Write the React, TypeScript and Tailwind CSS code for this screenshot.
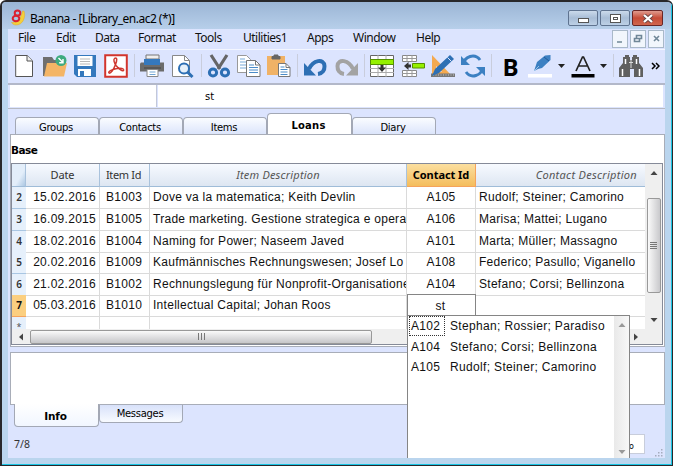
import React from "react";
import clsx from "clsx";

const MENU: [string, string][] = [
  ["File", "w-[38px]"],
  ["Edit", "w-[39px]"],
  ["Data", "w-[43px]"],
  ["Format", "w-[57px]"],
  ["Tools", "w-[48px]"],
  ["Utilities1", "w-[64px]"],
  ["Apps", "w-[46px]"],
  ["Window", "w-[63px]"],
  ["Help", "w-[40px]"],
];

const ROWS = [
  { n: 2, h: "h-[22px]", date: "15.02.2016", item: "B1003", text: "Dove va la matematica; Keith Devlin", id: "A105", who: "Rudolf; Steiner; Camorino" },
  { n: 3, h: "h-[22px]", date: "16.09.2015", item: "B1005", text: "Trade marketing. Gestione strategica e opera", id: "A106", who: "Marisa; Mattei; Lugano" },
  { n: 4, h: "h-[21px]", date: "18.02.2016", item: "B1004", text: "Naming for Power; Naseem Javed", id: "A101", who: "Marta; Müller; Massagno" },
  { n: 5, h: "h-[22px]", date: "20.02.2016", item: "B1009", text: "Kaufmännisches Rechnungswesen; Josef Lo", id: "A108", who: "Federico; Pasullo; Viganello" },
  { n: 6, h: "h-[21px]", date: "21.02.2016", item: "B1002", text: "Rechnungslegung für Nonprofit-Organisatione", id: "A104", who: "Stefano; Corsi; Bellinzona" },
  { n: 7, h: "h-[22px]", date: "05.03.2016", item: "B1010", text: "Intellectual Capital; Johan Roos", id: "", who: "" },
];

const SUGGESTIONS = [
  ["A102", "Stephan; Rossier; Paradiso"],
  ["A104", "Stefano; Corsi; Bellinzona"],
  ["A105", "Rudolf; Steiner; Camorino"],
];

const COLS = "grid grid-cols-[14px_74px_50px_257px_69px_169px]";

function Icon({ children }: { children: React.ReactNode }) {
  return (
    <svg width="24" height="24" viewBox="0 0 24 24" fill="none" className="shrink-0">
      {children}
    </svg>
  );
}

const Sep = () => <div className="mx-auto h-[23px] w-px bg-[#c9cddc]" />;

const Caret = () => (
  <svg width="7" height="4" viewBox="0 0 7 4" className="shrink-0">
    <path d="M0 0h7L3.5 4z" fill="#222" />
  </svg>
);

function Toolbar() {
  return (
    <div className="grid h-[32px] grid-cols-[31px_31px_30px_31px_6px_30px_31px_6px_30px_30px_30px_7px_30px_30px_6px_30px_31px_30px_30px_7px_31px_28px_15px_27px_15px_4px_31px_19px] place-items-center border-t border-[#f3f6ff] bg-[#dce4fe]">
      <Icon>
        <path d="M3.7 1.5h11.5l5.3 5.3v15.7H3.7z" fill="#fff" stroke="#555" />
        <path d="M15 1.5v5.5h5.5" fill="#eee" stroke="#555" />
      </Icon>
      <Icon>
        <path d="M0 3h9l2 3h10v16H0z" fill="#6f6f6f" />
        <path d="M4 9h20l-3 13.5H1z" fill="#f4b566" />
        <circle cx="18" cy="6.5" r="5.5" fill="#3eab80" />
        <path d="M15.5 4l4.5 4.5M20 5v3.8h-3.8" stroke="#fff" strokeWidth="1.4" />
      </Icon>
      <Icon>
        <path d="M1 1h22v22H4l-3-3z" fill="#3478bd" />
        <path d="M4.5 2h15v10h-15z" fill="#fff" />
        <path d="M7 5h10M7 7.5h10M7 10h10" stroke="#b8b8b8" />
        <path d="M5 15h13v7H5z" fill="#fff" />
        <path d="M7 17h4v5H7z" fill="#3478bd" />
      </Icon>
      <Icon>
        <path d="M1.2 1.2h21.6v21.6H1.2z" fill="#fff" stroke="#d2352d" strokeWidth="2" />
        <path d="M10.5 4.500c3-1.800 2.600 2 1 6C9.700 15.500 6.500 20 5 19c-1.500-1.500 4-4 8-4.500 4-.6 7 0 6.700 1.500-.5 2-5-1-7.700-4.500-1.800-2.500-2.800-6-1.500-7z" stroke="#cf3830" strokeWidth="1.500" />
      </Icon>
      <Sep />
      <Icon>
        <path d="M6 1h13v4H6z" fill="#eee" stroke="#777" />
        <path d="M1 8.500h23v9H0v-8z" fill="#6b6b6b" />
        <path d="M4 5h16v6H4z" fill="#3478bd" />
        <path d="M4 14h17" stroke="#444" />
        <path d="M7 15.500h11v7H7z" fill="#fff" stroke="#888" />
        <path d="M9.500 18h6M9.500 20.500h6" stroke="#6fa5d4" />
      </Icon>
      <Icon>
        <path d="M1.500 1.500h12l5 5v16h-17z" fill="#fff" stroke="#888" />
        <path d="M13.500 1.500v5h5" stroke="#888" />
        <circle cx="13" cy="14.500" r="5" fill="#e6f0fa" stroke="#2d6fb4" strokeWidth="2" />
        <path d="M16.500 18l5 5" stroke="#2d6fb4" strokeWidth="3" />
      </Icon>
      <Sep />
      <Icon>
        <path d="M4 1l9 14M20 1l-9 14" stroke="#666" strokeWidth="3.200" />
        <circle cx="6" cy="18.500" r="3.600" stroke="#2d6fb4" strokeWidth="3" />
        <circle cx="18" cy="18.500" r="3.600" stroke="#2d6fb4" strokeWidth="3" />
      </Icon>
      <Icon>
        <path d="M.5 1.500h9l4 4v13H.5z" fill="#fff" stroke="#999" />
        <path d="M3 5h5M3 8h6M3 11h6M3 14h6" stroke="#76a9d8" />
        <path d="M9.500 6.500h9l4.500 4.500v11.500H9.500z" fill="#fff" stroke="#777" />
        <path d="M18.500 6.500V11H23" stroke="#777" />
        <path d="M12 11h5M12 13.500h9M12 16h9M12 18.500h9" stroke="#4b8cc8" />
      </Icon>
      <Icon>
        <path d="M0 2h18v19H0z" fill="#f0b266" />
        <path d="M5 2.500h8V5H5zM7 1h4v2H7z" fill="#666" stroke="#666" />
        <path d="M11.500 9.500h7.500l4 4v9H11.500z" fill="#fff" stroke="#777" />
        <path d="M19 9.500v4h4" stroke="#777" />
        <path d="M13.500 13h4M13.500 15.500h7M13.500 18h7M13.500 20.500h7" stroke="#4b8cc8" />
      </Icon>
      <Sep />
      <Icon>
        <path d="M5 15C9 6 20 4 20.500 12c.2 4-2 7.500-6.500 8" stroke="#2d6fb4" strokeWidth="4" />
        <path d="M0 9v12.500h12z" fill="#2d6fb4" />
      </Icon>
      <Icon>
        <path d="M19 15C15 6 4 4 3.500 12c-.2 4 2 7.500 6.500 8" stroke="#a3a3a3" strokeWidth="4" />
        <path d="M24 9v12.500H12z" fill="#a3a3a3" />
      </Icon>
      <Sep />
      <Icon>
        <path d="M.5 1.500h23v21H.5z" fill="#fff" stroke="#666" />
        <path d="M8 1v22M16 1v22M0 14.500h24M0 18.500h24" stroke="#aaa" />
        <path d="M.5 5.500h23v5H.5z" fill="#95f000" stroke="#559000" />
        <path d="M10.500 11h3v2.500h2.500L12 18l-4-4.500h2.500z" fill="#333" />
      </Icon>
      <Icon>
        <path d="M1.500 1.500h14v6h-14zM1.500 16.500h14v6h-14z" fill="#fff" stroke="#888" />
        <path d="M1 4.500h15M1 19.500h15M6 1v7M11 1v7M6 16v7M11 16v7" stroke="#999" />
        <path d="M11.500 9.500h12v4.500h-12z" fill="#95f000" stroke="#559000" />
        <path d="M10 10.500H7.500V8L3 12l4.500 4v-2.500H10z" fill="#333" />
      </Icon>
      <Icon>
        <path d="M1 1l20 21H1z" fill="#f4a950" />
        <path d="M5 12l6 6H5z" fill="#dce4fe" />
        <path d="M0 19.500h24V23H0z" fill="#777" />
        <path d="M2 21h21" stroke="#ccc" strokeDasharray="1 1.500" />
        <path d="M19 1l4 4L8 19l-7 3 3-7z" fill="#2d6fb4" />
        <path d="M16.500 3.500l4 4" stroke="#dce4fe" />
      </Icon>
      <Icon>
        <path d="M2.500 11C3 2 14-1 19 6M21.500 13C21 22 10 25 5 18" stroke="#3c80c2" strokeWidth="3" />
        <path d="M0 2v9h9zM24 22v-9h-9z" fill="#3c80c2" />
      </Icon>
      <Sep />
      <span className="pt-[2px] font-['Open_Sans',sans-serif] text-[24px] leading-[24px] font-bold text-black">B</span>
      <Icon>
        <path d="M0 20h24v3.500H0z" fill="#fff" />
        <path d="M17 1.500l5.500-.5v5L14 14l-4 1-4 2 3-9z" fill="#3c80c2" />
        <path d="M6 17l5-5" stroke="#9cc3e8" />
        <path d="M16 3l5 4" stroke="#20599a" />
      </Icon>
      <Caret />
      <Icon>
        <path d="M.5 20h23v3.500H.5z" fill="#000" />
        <path d="M5 17L11.500 3h1L19 17M8 12h8" stroke="#222" strokeWidth="1.700" />
      </Icon>
      <Caret />
      <Sep />
      <Icon>
        <path d="M4 3h2V1h4v2h1v3h2V3h1V1h4v2h2v6l4 5v9h-9v-8h-4v8H0v-9l4-5z" fill="#606060" />
        <path d="M6.500 5v5M17.500 5v5M3.500 15v7M20.500 15v7" stroke="#fff" strokeWidth="1.500" />
        <path d="M10 8.500h4M12 6v8" stroke="#ddd" />
      </Icon>
      <svg width="9" height="8" viewBox="0 0 9 8" fill="none">
        <path d="M1 1l3 3-3 3M5 1l3 3-3 3" stroke="#000" strokeWidth="1.500" />
      </svg>
    </div>
  );
}

function Titlebar() {
  return (
    <div className="flex h-[27px] bg-linear-to-b from-[#9bb5d5] to-[#b7cfea] pl-[9px]">
      <svg width="15" height="17" viewBox="0 0 15 17" fill="none" className="mt-[7px]">
        <path d="M13 2c2 6-1 14-8 14-2 0-3.500-1-4.500-2.500C7 14 10 9 11.500 2z" fill="#f4cf3a" stroke="#e0a82a" strokeWidth=".5" />
        <ellipse cx="6.500" cy="4" rx="2.800" ry="2.500" stroke="#d92332" strokeWidth="2" />
        <ellipse cx="5" cy="9.500" rx="3.300" ry="2.800" stroke="#d92332" strokeWidth="2" />
      </svg>
      <span className="mt-[8px] ml-[4px] font-['Noto_Sans',sans-serif] text-[12px] leading-[18px] tracking-[-0.5px] whitespace-nowrap text-black">
        Banana - [Library_en.ac2 (*)]
      </span>
      <div className="mt-[8px] mr-[8px] ml-auto flex gap-[2px]">
        <div className="flex h-[16px] w-[30px] items-center justify-center rounded-[2px] border border-[#5f7390] bg-linear-to-b from-[#cbdaeb] via-[#a8bdd6] to-[#bdd0e6]">
          <i className="mt-[4px] h-[5px] w-[11px] border border-[#555] bg-white" />
        </div>
        <div className="flex h-[16px] w-[30px] items-center justify-center rounded-[2px] border border-[#5f7390] bg-linear-to-b from-[#cbdaeb] via-[#a8bdd6] to-[#bdd0e6]">
          <i className="flex h-[9px] w-[11px] items-center justify-center border border-[#555] bg-white">
            <i className="h-[3px] w-[5px] border border-[#555]" />
          </i>
        </div>
        <div className="flex h-[16px] w-[31px] items-center justify-center rounded-[2px] border border-[#6a2626] bg-linear-to-b from-[#df9a8e] via-[#c64b37] to-[#d0664f]">
          <svg width="12" height="9" viewBox="0 0 12 9">
            <path d="M2 1l8 7M10 1L2 8" stroke="#6a4444" strokeWidth="4" />
            <path d="M2 1l8 7M10 1L2 8" stroke="#fff" strokeWidth="2.300" />
          </svg>
        </div>
      </div>
    </div>
  );
}

function Menubar() {
  return (
    <div className="flex h-[20px] bg-[#dce4fe] pl-[10px]">
      {MENU.map(([label, w]) => (
        <span key={label} className={clsx(w, "shrink-0 font-['Noto_Sans',sans-serif] text-[12px] leading-[18px] tracking-[-0.5px] whitespace-nowrap text-[#111]")}>
          {label}
        </span>
      ))}
      <div className="mt-[1px] mr-[1px] ml-auto flex gap-[2px]">
        {["M4 11h5", "M3.500 7.500h5v3h-5zM5.500 7V4.500h5v3H9", "M5 5l5 5M10 5l-5 5"].map((d) => (
          <div key={d} className="h-[18px] w-[16px] border border-[#a9b9c9] bg-[#f1f6fc]">
            <svg width="14" height="16" viewBox="0 0 14 16" fill="none">
              <path d={d} stroke="#6f8797" strokeWidth="1.600" />
            </svg>
          </div>
        ))}
      </div>
    </div>
  );
}

function Tab({ label, active }: { label: string; active?: boolean }) {
  return (
    <div
      className={clsx(
        "flex justify-center rounded-t-[4px] border border-b-0 border-[#a3a8b5] font-['DejaVu_Sans',sans-serif] text-black",
        active
          ? "h-[21px] w-[85px] bg-white pr-[2px] text-[10px] leading-[23px] font-bold tracking-[0.2px]"
          : "h-[17px] w-[84px] bg-linear-to-b from-[#fafcff] to-[#dce5fb] pr-[2px] text-[10px] leading-[19px] tracking-[-0.3px]",
      )}
    >
      {label}
    </div>
  );
}

const Arrow = ({ d, dim }: { d: string; dim?: boolean }) => (
  <svg width="8" height="8" viewBox="0 0 8 8" className="shrink-0">
    <path d={d} fill={dim ? "#999" : "#444"} />
  </svg>
);

const HEAD = "flex h-full items-center border-r border-b border-r-[#a9c2dc] border-b-[#9fbcd8] pt-[1px] whitespace-nowrap";
const CELL = "h-full overflow-hidden border-r border-b border-[#dadada] whitespace-nowrap";

function Table() {
  return (
    <div className="flex h-[182px] w-[652px] flex-col border border-[#858a98] bg-white">
      <div className="flex h-[165px]">
        <div className="w-[633px]">
          <div className={clsx(COLS, "h-[23px] bg-linear-to-b from-[#f7faff] to-[#dce5f1] font-['Noto_Sans',sans-serif] text-[11px] text-[#333]")}>
            <div className={clsx(HEAD, "bg-linear-to-br from-[#e3eefa] from-60% to-[#acc7e2]")} />
            <div className={clsx(HEAD, "justify-center tracking-[-0.1px]")}>Date</div>
            <div className={clsx(HEAD, "justify-center pr-[2px] tracking-[-0.35px]")}>Item Id</div>
            <div className={clsx(HEAD, "justify-center tracking-[0.2px] text-[#555] italic")}>Item Description</div>
            <div className={clsx(HEAD, "justify-center border-r-[#f5a35c] border-b-[#f5a35c] bg-linear-to-b from-[#fbdf9f] to-[#f4bd5c] font-bold tracking-[-0.05px] text-black")}>
              Contact Id
            </div>
            <div className={clsx(HEAD, "justify-end border-r-0 pr-[8px] tracking-[0.3px] text-[#555] italic")}>Contact Description</div>
          </div>
          {ROWS.map((r) => (
            <div key={r.n} className={clsx(COLS, r.h, "font-['Liberation_Sans',sans-serif] text-[12px] leading-[21px] tracking-[0.28px] text-[#111]")}>
              <div
                className={clsx(
                  "h-full border-b text-center font-['Noto_Sans',sans-serif] text-[10px] tracking-normal",
                  r.n === 7 ? "border-[#f5a35c] bg-[#fbcf80] font-bold" : "border-[#a9c6e2] bg-[#e6f0fb] font-semibold text-[#333]",
                )}
              >
                {r.n}
              </div>
              <div className={clsx(CELL, "pr-[3px] text-right")}>{r.date}</div>
              <div className={clsx(CELL, "pl-[6px]")}>{r.item}</div>
              <div className={clsx(CELL, "pl-[3px]")}>{r.text}</div>
              {r.n === 7 ? (
                <div className="-mt-px h-[23px] border border-[#858585] bg-white pt-px pr-[2px] text-center">st</div>
              ) : (
                <div className={clsx(CELL, "text-center")}>{r.id}</div>
              )}
              <div className={clsx(CELL, "border-r-0 pl-[3px]")}>{r.who}</div>
            </div>
          ))}
          <div className={clsx(COLS, "h-[12px]")}>
            <div className="overflow-hidden bg-[#e6f0fb] pt-[3px] text-center font-['Noto_Sans',sans-serif] text-[9px] leading-[14px] text-[#555]">*</div>
            <div className="border-r border-[#dadada]" />
            <div className="border-r border-[#dadada]" />
            <div className="border-r border-[#dadada]" />
            <div className="border-r border-[#dadada]" />
            <div />
          </div>
        </div>
        <div className="flex w-[17px] flex-col items-center bg-[#efefef]">
          <div className="flex h-[34px] items-center pb-[16px]">
            <Arrow d="M4 2l3.500 4h-7z" />
          </div>
          <div className="flex h-[95px] w-[14px] flex-col items-center justify-center gap-[1px] rounded-[2px] border border-[#999] bg-linear-to-r from-[#fafafa] to-[#c9c9cc]">
            {[0, 1, 2, 3].map((i) => (
              <i key={i} className="h-px w-[7px] bg-[#777]" />
            ))}
          </div>
          <div className="mt-auto mb-[5px]">
            <Arrow d="M4 6l3.500-4h-7z" />
          </div>
        </div>
      </div>
      <div className="flex h-[15px] items-center bg-[#efefef]">
        <div className="flex w-[18px] justify-center">
          <Arrow d="M2 4l4-3.500v7z" />
        </div>
        <div className="flex h-[14px] w-[342px] items-center justify-center gap-[2px] rounded-[2px] border border-[#999] bg-linear-to-b from-[#fafafa] to-[#c6c6c9]">
          {[0, 1, 2].map((i) => (
            <i key={i} className="h-[7px] w-px bg-[#777]" />
          ))}
        </div>
        <div className="mr-[22px] ml-auto">
          <Arrow d="M6 4L2 .5v7z" />
        </div>
      </div>
    </div>
  );
}

function Suggestions() {
  return (
    <div className="absolute top-[315px] left-[407px] flex h-[143px] w-[223px] border border-b-0 border-[#858585] bg-white">
      <div className="flex-1 pl-[1px] font-['Liberation_Sans',sans-serif] text-[12px] leading-[19px] tracking-[0.34px] text-[#111]">
        {SUGGESTIONS.map(([id, name], i) => (
          <div key={id} className="flex h-[20.500px] whitespace-nowrap">
            <span className={clsx("h-[20px] w-[36px] border border-dotted pl-[1px]", i === 0 ? "border-[#333]" : "border-transparent")}>{id}</span>
            <span className="ml-[5px] pt-px">{name}</span>
          </div>
        ))}
      </div>
      <div className="flex w-[15px] flex-col items-center justify-between bg-linear-to-r from-[#e9e9e9] to-[#f8f8f8] pt-[5px] pb-[2px]">
        <Arrow d="M4 2l3.500 4h-7z" dim />
        <Arrow d="M4 6l3.500-4h-7z" dim />
      </div>
    </div>
  );
}

export default function App() {
  return (
    <div className="relative h-[466px] w-[673px] overflow-hidden rounded-t-[6px] border-2 border-r border-b border-[#28282b] bg-[#bad5ee]">
      <div className="flex h-[463px] w-[670px] flex-col border-r border-b border-[#19c5e4]">
        <Titlebar />
        <div className="ml-[6px] flex h-[429px] w-[657px] flex-col bg-[#dce4fe]">
          <Menubar />
          <Toolbar />
          <div className="mt-[2px] flex h-[26px] border-t-2 border-b border-t-[#b3b8c9] border-b-[#b6b9c2] pl-[2px]">
            <div className="h-[22px] w-[146px] bg-white" />
            <div className="mr-px h-[22px] w-px bg-[#c3c8d8]" />
            <div className="h-[22px] w-[505px] bg-white pl-[47px] font-['DejaVu_Sans',sans-serif] text-[10px] leading-[23px] text-black">st</div>
          </div>
          <div className="flex h-[25px] items-end pl-[7px]">
            <Tab label="Groups" />
            <Tab label="Contacts" />
            <Tab label="Items" />
            <Tab label="Loans" active />
            <Tab label="Diary" />
          </div>
          <div className="ml-[2px] flex h-[213px] w-[655px] flex-col border border-[#a8adb8] bg-white">
            <div className="h-[28px] pt-[7px] font-['DejaVu_Sans',sans-serif] text-[10.500px] leading-[17px] font-bold tracking-[-0.5px] text-black">Base</div>
            <Table />
          </div>
          <div className="mt-[5px] ml-[2px] h-[53px] w-[655px] border border-[#a8adb8] bg-white" />
          <div className="flex h-[29px] pl-[6px]">
            <div className="-mt-px h-[23px] w-[85px] rounded-b-[4px] border border-t-0 border-[#a3a8b5] bg-linear-to-b from-white to-[#f1f6ff] pt-[1px] pr-[2px] text-center font-['DejaVu_Sans',sans-serif] text-[10.500px] leading-[22px] font-bold tracking-[-0.2px]">
              Info
            </div>
            <div className="h-[18px] w-[84px] rounded-b-[4px] border border-t-0 border-[#a3a8b5] bg-linear-to-b from-[#d8e1fa] to-[#f8fbff] pr-[2px] text-center font-['DejaVu_Sans',sans-serif] text-[10px] leading-[18px] tracking-[-0.3px]">
              Messages
            </div>
          </div>
          <div className="flex h-[24px] items-start justify-between pl-[6px]">
            <span className="font-['Noto_Sans',sans-serif] text-[10.500px] leading-[20px] text-[#333]">7/8</span>
            <div className="flex">
              <div className="mr-[10px] h-[20px] w-[24px] border border-[#c8cddb] bg-white pt-px pr-[10px] text-right font-['DejaVu_Sans',sans-serif] text-[8px] leading-[22px]">
                o
              </div>
              <svg width="10" height="24" viewBox="0 0 10 24">
                <path d="M6 15h1.500v1.500H6zM3 18h1.500v1.500H3zM6 18h1.500v1.500H6zM0 21h1.500v1.500H0zM3 21h1.500v1.500H3zM6 21h1.500v1.500H6z" fill="#a5acbd" />
              </svg>
            </div>
          </div>
        </div>
      </div>
      <div className="absolute -top-[2px] -left-[2px]">
        <Suggestions />
      </div>
    </div>
  );
}
